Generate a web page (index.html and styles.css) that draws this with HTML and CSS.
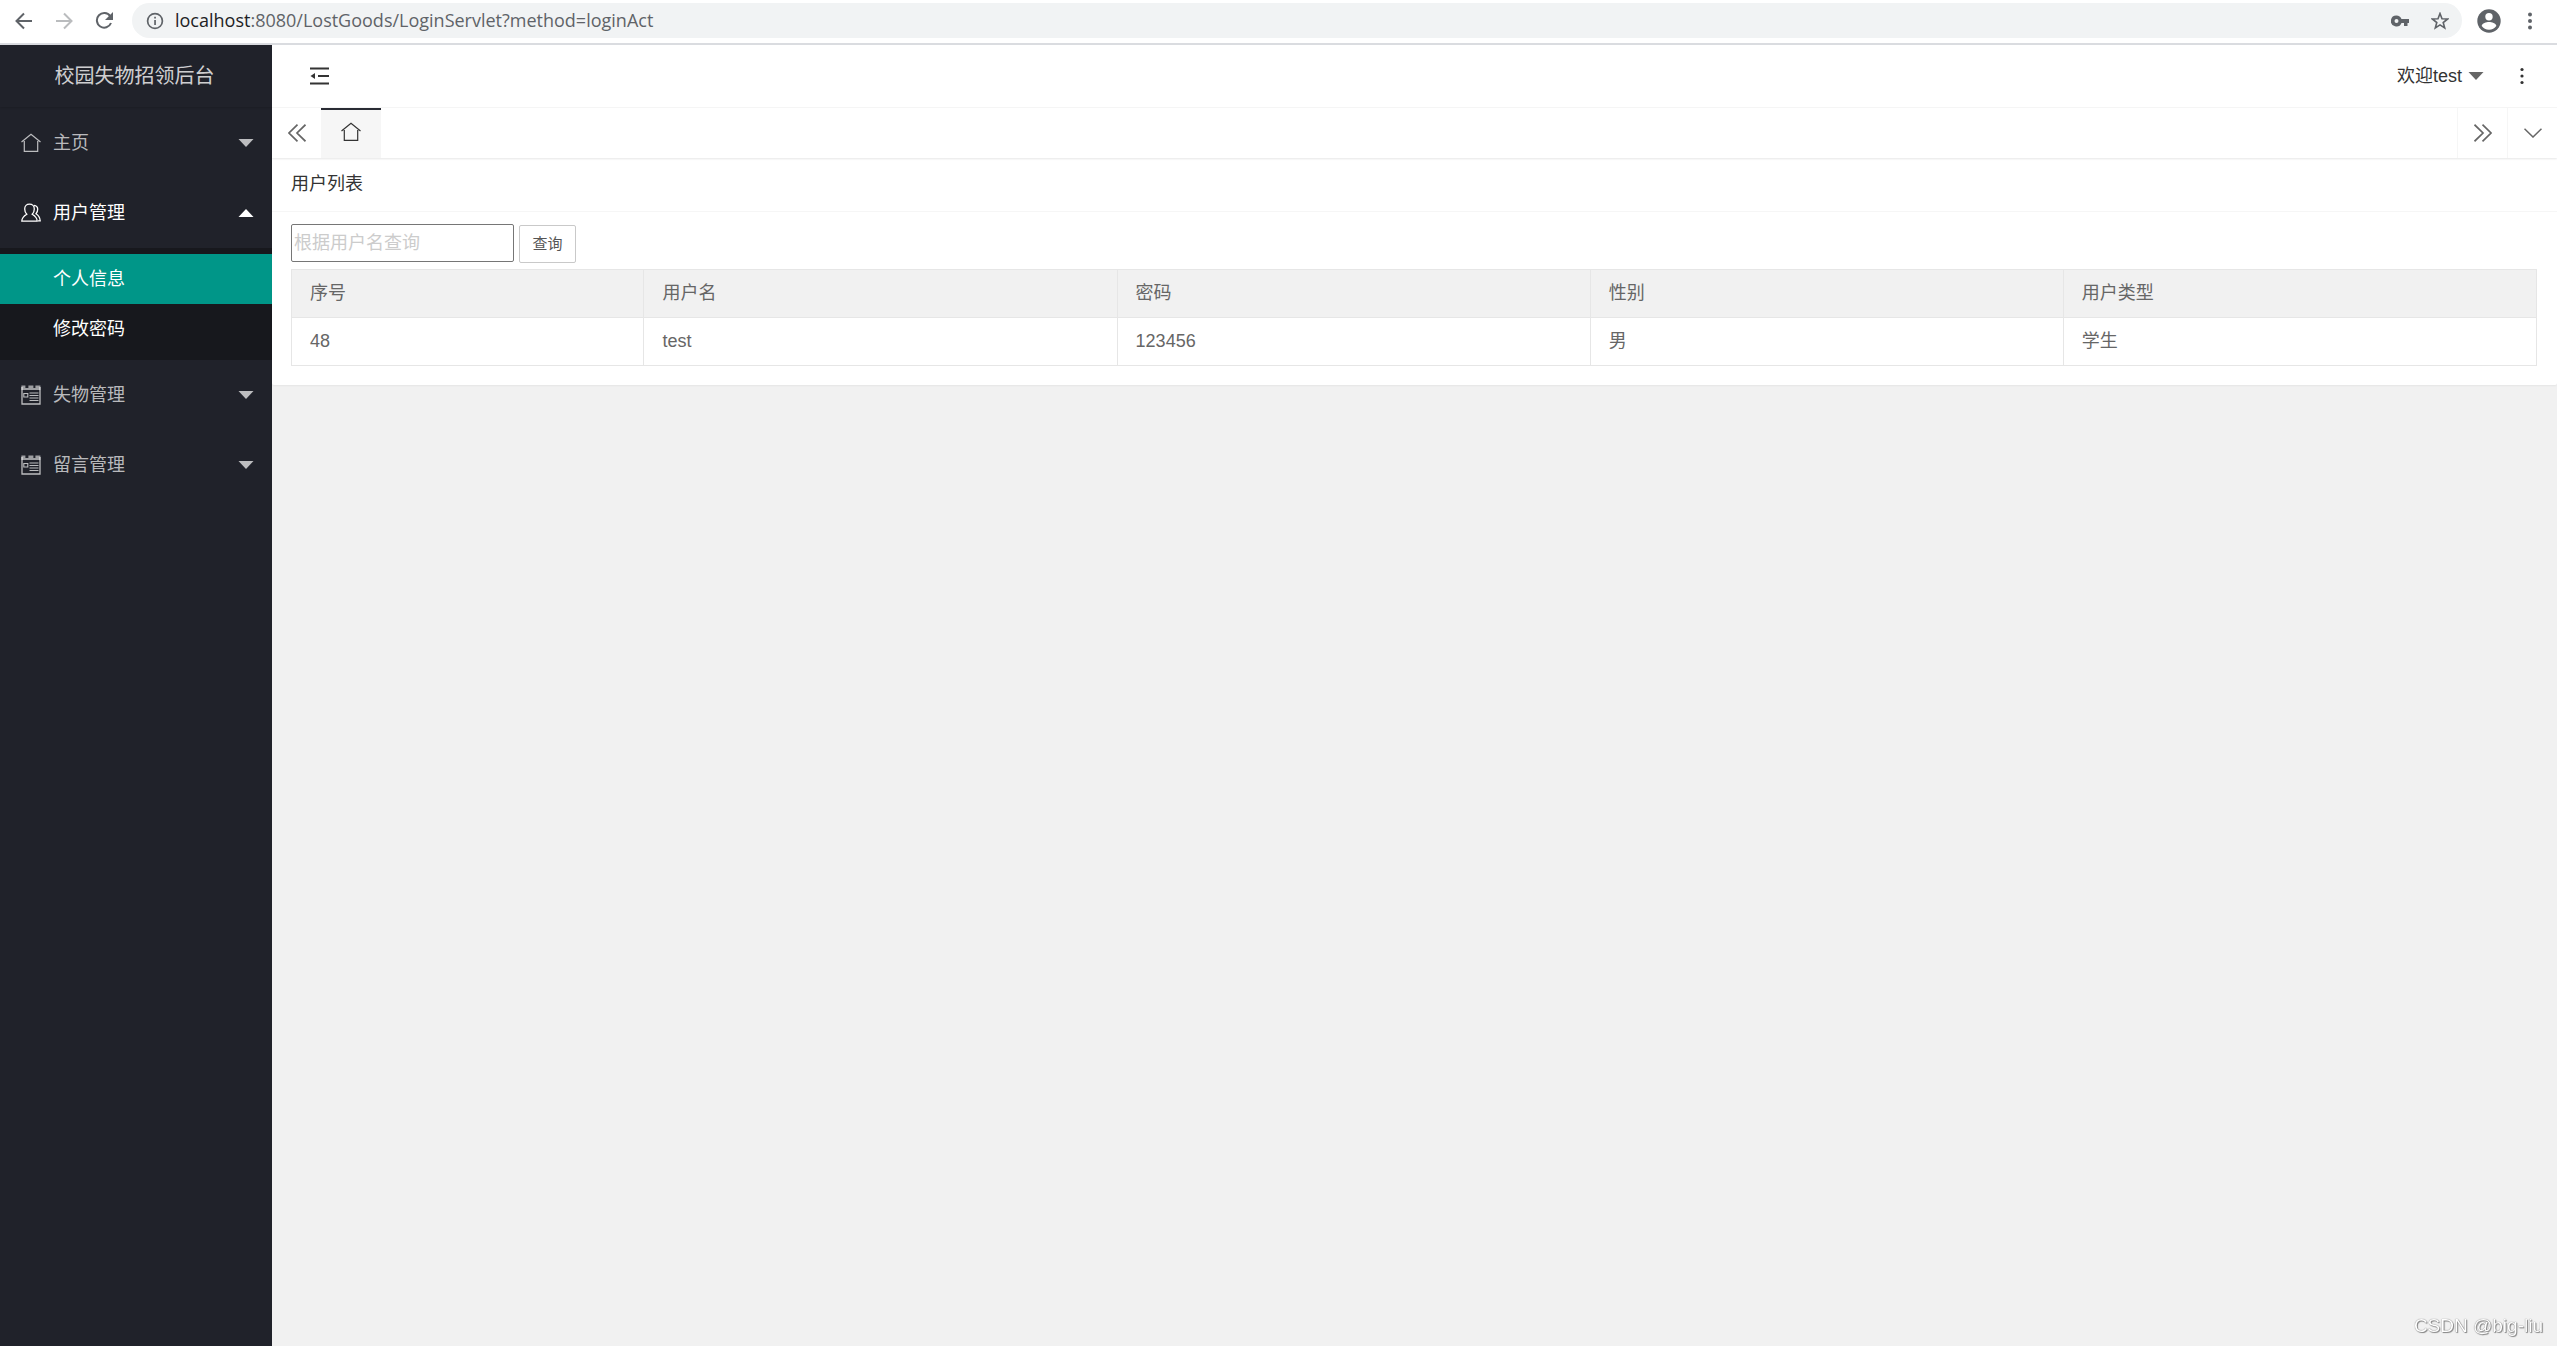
FILE: index.html
```html
<!DOCTYPE html>
<html lang="zh-CN">
<head>
<meta charset="utf-8">
<meta name="viewport" content="width=device-width, initial-scale=1">
<title>校园失物招领后台</title>
<link rel="stylesheet" href="styles.css">
</head>
<body>
<div class="browser">
  <button class="tool" type="button" aria-label="后退"><svg width="18" height="18" viewBox="0 0 18 18"><path d="M17 9H2M9 1.5L1.500 9L9 16.500" fill="none" stroke="#5f6368" stroke-width="2"/></svg></button>
  <button class="tool" type="button" aria-label="前进"><svg width="18" height="18" viewBox="0 0 18 18"><path d="M1 9h15M9 1.500L16.500 9L9 16.500" fill="none" stroke="#babcbe" stroke-width="2"/></svg></button>
  <button class="tool" type="button" aria-label="刷新"><svg width="18" height="18" viewBox="0 0 18 18"><path d="M15.200 4.200A7.300 7.300 0 1 0 16 11" fill="none" stroke="#5f6368" stroke-width="2"/><path d="M18 0v8h-8z" fill="#5f6368"/></svg></button>
  <div class="address">
    <svg class="info" width="18" height="18" viewBox="0 0 18 18"><circle cx="9" cy="9" r="7.400" fill="none" stroke="#5f6368" stroke-width="1.700"/><path d="M8.200 8h1.700v5H8.200zM8.200 4.800h1.700v1.800H8.200z" fill="#5f6368"/></svg>
    <span class="url"><span class="host">localhost</span>:8080/LostGoods/LoginServlet?method=loginAct</span>
    <svg class="key" width="18" height="12" viewBox="0 0 18 12"><path d="M5.500 .5a5.500 5.500 0 1 0 5 7.500H13v3h3.500V8H18V4H10.500A5.500 5.500 0 0 0 5.500 .5zm0 3.500a2 2 0 1 1 0 4a2 2 0 0 1 0-4z" fill="#5f6368" fill-rule="evenodd"/></svg>
    <svg class="star" width="18" height="18" viewBox="0 0 18 18"><path d="M9 1.500l2 5.200 5.600.3-4.400 3.500 1.500 5.500L9 12.900 4.300 16l1.500-5.500L1.400 7 7 6.700z" fill="none" stroke="#5f6368" stroke-width="1.600"/></svg>
  </div>
  <button class="tool account" type="button" aria-label="个人资料"><svg width="24" height="24" viewBox="0 0 24 24"><circle cx="12" cy="12" r="11.700" fill="#5f6368"/><circle cx="12" cy="7.700" r="3.700" fill="#fff"/><path d="M4.700 17c0-2.700 4.800-4 7.300-4s7.300 1.300 7.300 4c-1.500 2.300-4.300 3.700-7.300 3.700S6.200 19.300 4.700 17z" fill="#fff"/></svg></button>
  <button class="tool" type="button" aria-label="更多"><svg width="4" height="18" viewBox="0 0 4 18"><g fill="#5f6368"><circle cx="2" cy="2.500" r="2"/><circle cx="2" cy="9" r="2"/><circle cx="2" cy="15.500" r="2"/></g></svg></button>
</div>

<svg class="symbols" aria-hidden="true">
  <symbol id="home" viewBox="0 0 20 20"><path d="M.5 9L10 1.200L19.500 9M3.300 8v10.300h13.400V8" fill="none" stroke="currentColor" stroke-width="1.200"/></symbol>
  <symbol id="users" viewBox="0 0 20 20"><path d="M5.800 11.200C4 9.500 3.700 8 3.700 6c0-3 2-4.800 4.800-4.800S13.300 3 13.300 6c0 2-.3 3.500-2.100 5.200 2.300 1.300 5 3.300 5 7H.8c0-3.700 2.700-5.700 5-7zM13 2.300c2.500.3 3.700 2 3.700 4 0 1.700-.5 3.200-1.700 4.500 2 1.200 4 3.500 4.200 7h-2.200" fill="none" stroke="currentColor" stroke-width="1.300"/></symbol>
  <symbol id="form" viewBox="0 0 20 20"><path d="M1 2v17h18V2" fill="none" stroke="currentColor" stroke-width="1.300"/><path d="M.4 .5h4V3h3V.5h5V3h2V.5h5V5H.4z" fill="currentColor" opacity=".8"/><path d="M2.800 8.500h4v3.500h-4zM8.500 8h9M8.500 10.500h9M8.500 13h9M8.500 15.500h9" fill="none" stroke="currentColor" stroke-width="1.100"/></symbol>
  <symbol id="down" viewBox="0 0 16 8"><path d="M.5 0h15L8 8z" fill="currentColor"/></symbol>
  <symbol id="up" viewBox="0 0 16 8"><path d="M.5 8h15L8 0z" fill="currentColor"/></symbol>
</svg>

<div class="app">
  <aside class="side">
    <div class="logo">校园失物招领后台</div>
    <nav>
      <button class="item" type="button"><svg class="icon"><use href="#home"/></svg><span>主页</span><svg class="caret"><use href="#down"/></svg></button>
      <button class="item open" type="button" aria-expanded="true"><svg class="icon"><use href="#users"/></svg><span>用户管理</span><svg class="caret"><use href="#up"/></svg></button>
      <div class="sub">
        <a class="active" href="#">个人信息</a>
        <a href="#">修改密码</a>
      </div>
      <button class="item" type="button"><svg class="icon"><use href="#form"/></svg><span>失物管理</span><svg class="caret"><use href="#down"/></svg></button>
      <button class="item" type="button"><svg class="icon"><use href="#form"/></svg><span>留言管理</span><svg class="caret"><use href="#down"/></svg></button>
    </nav>
  </aside>
  <main class="main">
    <header class="header">
      <button class="fold" type="button" aria-label="侧边伸缩"><svg width="20" height="18" viewBox="0 0 20 18"><path d="M0 1.500h19M8 9h11M0 16.500h19" stroke="#333" stroke-width="2.200"/><path d="M5 6v6L.5 9z" fill="#333"/></svg></button>
      <button class="user" type="button">欢迎test<svg class="caret"><use href="#down"/></svg></button>
      <button class="more" type="button" aria-label="更多"><svg width="4" height="18" viewBox="0 0 4 18"><g fill="#333"><circle cx="2" cy="2.500" r="1.600"/><circle cx="2" cy="9" r="1.600"/><circle cx="2" cy="15.500" r="1.600"/></g></svg></button>
    </header>
    <div class="tabs">
      <button class="prev" type="button" aria-label="向左"><svg width="18" height="18" viewBox="0 0 18 18"><path d="M9.500 .7L1 9l8.500 8.300M17.500 .7L9 9l8.500 8.300" fill="none" stroke="#666" stroke-width="1.700"/></svg></button>
      <a class="tab" href="#" aria-label="主页"><svg class="icon"><use href="#home"/></svg></a>
      <button class="next" type="button" aria-label="向右"><svg width="18" height="18" viewBox="0 0 18 18"><path d="M.5 .7L9 9L.5 17.300M8.500 .7L17 9l-8.500 8.300" fill="none" stroke="#666" stroke-width="1.700"/></svg></button>
      <button class="next" type="button" aria-label="标签操作"><svg width="18" height="10" viewBox="0 0 18 10"><path d="M.5 .7L9 9L17.500 .7" fill="none" stroke="#666" stroke-width="1.500"/></svg></button>
    </div>
    <section class="card">
      <h1>用户列表</h1>
      <div class="body">
        <form class="search">
          <input type="text" placeholder="根据用户名查询" aria-label="根据用户名查询">
          <button type="button">查询</button>
        </form>
        <table>
          <colgroup><col class="narrow"><col class="wide"><col class="wide"><col class="wide"><col class="wide"></colgroup>
          <thead><tr><th>序号</th><th>用户名</th><th>密码</th><th>性别</th><th>用户类型</th></tr></thead>
          <tbody><tr><td>48</td><td>test</td><td>123456</td><td>男</td><td>学生</td></tr></tbody>
        </table>
      </div>
    </section>
  </main>
</div>
<div class="mark">CSDN @big-liu</div>
</body>
</html>
```
FILE: styles.css
```css
* { box-sizing: border-box; }
body {
  margin: 0;
  min-height: 100vh;
  display: flex;
  flex-direction: column;
  background: #f1f1f1;
  color: #333;
  font: 18px/24px "Liberation Sans", "Noto Sans CJK SC", sans-serif;
}
button {
  margin: 0;
  padding: 0;
  border: 0;
  background: none;
  color: inherit;
  font: inherit;
  cursor: pointer;
}
a { color: inherit; text-decoration: none; }
svg { display: block; flex: none; }
.symbols { display: none; }
.icon { width: 20px; height: 20px; }
.caret { width: 16px; height: 8px; }

/* browser toolbar */
.browser {
  display: flex;
  align-items: center;
  height: 45px;
  padding: 0 7px 2px 4px;
  background: #fff;
  border-bottom: 2px solid #dadce0;
}
.tool {
  display: flex;
  justify-content: center;
  width: 40px;
}
.account { width: 42px; }
.address {
  display: flex;
  flex: 1;
  align-items: center;
  height: 35px;
  margin: 0 6px 0 8px;
  padding: 0 13px 0 14px;
  border-radius: 18px;
  background: #f1f3f4;
}
.url {
  flex: 1;
  margin-left: 11px;
  padding-bottom: 2px;
  color: #5f6368;
  font-family: "Open Sans", "Noto Sans", sans-serif;
}
.host { color: #202124; }
.key { margin-right: 22px; }

.app { display: flex; flex: 1; }

/* sidebar */
.side {
  flex: none;
  width: 272px;
  background: #20222a;
  color: rgba(255, 255, 255, .7);
}
.logo {
  height: 62px;
  padding-right: 3px;
  font-size: 20px;
  line-height: 62px;
  text-align: center;
  color: rgba(255, 255, 255, .8);
  box-shadow: 0 1px 2px rgba(0, 0, 0, .15);
}
.item {
  display: flex;
  align-items: center;
  gap: 12px;
  width: 100%;
  height: 70px;
  padding: 0 18px 0 21px;
  text-align: left;
}
.item span { flex: 1; }
.open { color: #fff; }
nav { padding-top: 1px; }
.sub {
  padding: 6px 0;
  background: #17181d;
  color: #fff;
}
.sub a {
  display: block;
  padding-left: 53px;
  line-height: 50px;
}
.sub .active { background: #009688; }

/* content column */
.main { flex: 1; min-width: 0; }
.header {
  display: flex;
  align-items: center;
  height: 63px;
  padding-right: 33px;
  background: #fff;
  border-bottom: 1px solid #f6f6f6;
}
.fold { margin-left: 38px; }
.user {
  display: flex;
  align-items: center;
  gap: 6px;
  margin-left: auto;
}
.user .caret { color: #666; }
.more { margin-left: 36px; }
.tabs {
  display: flex;
  height: 50px;
  background: #fff;
  box-shadow: 0 1px 2px rgba(0, 0, 0, .1);
  position: relative;
}
.prev, .next {
  display: flex;
  align-items: center;
  justify-content: center;
  width: 50px;
}
.prev { width: 49px; }
.next { border-left: 1px solid #f6f6f6; }
.tab {
  display: flex;
  align-items: center;
  justify-content: center;
  width: 60px;
  margin-right: auto;
  padding-bottom: 4px;
  border-top: 2px solid #292b34;
  background: #f6f6f6;
}

.card {
  background: #fff;
  border-radius: 0 0 2px 2px;
  box-shadow: 0 1px 2px rgba(0, 0, 0, .05);
}
h1 {
  margin: 0;
  height: 54px;
  padding-left: 19px;
  border-bottom: 1px solid #f6f6f6;
  font-size: 18px;
  font-weight: 400;
  line-height: 52px;
}
.body { padding: 12px 20px 19px 19px; }
.search {
  display: flex;
  align-items: flex-end;
  gap: 5px;
  margin-bottom: 6px;
}
.search input {
  width: 223px;
  height: 38px;
  margin-bottom: 1px;
  padding: 1px 2px;
  border: 1px solid #767676;
  border-radius: 2px;
  font: inherit;
}
.search input::placeholder { color: #ccc; }
.search button {
  width: 57px;
  height: 38px;
  border: 1px solid #c9c9c9;
  border-radius: 2px;
  color: #555;
  font-size: 15px;
}
table {
  width: 100%;
  border-collapse: collapse;
  table-layout: fixed;
  color: #666;
}
.narrow { width: 149px; }
.wide { width: 200px; }
th, td {
  height: 48px;
  padding: 0 18px 2px;
  border: 1px solid #e6e6e6;
  font-weight: 400;
  text-align: left;
}
th { background: #f1f1f1; }

.mark {
  position: fixed;
  right: 14px;
  bottom: 8px;
  color: #fff;
  font-size: 19px;
  text-shadow: 0 0 1px #555, 1px 1px 1px #888;
}
```
